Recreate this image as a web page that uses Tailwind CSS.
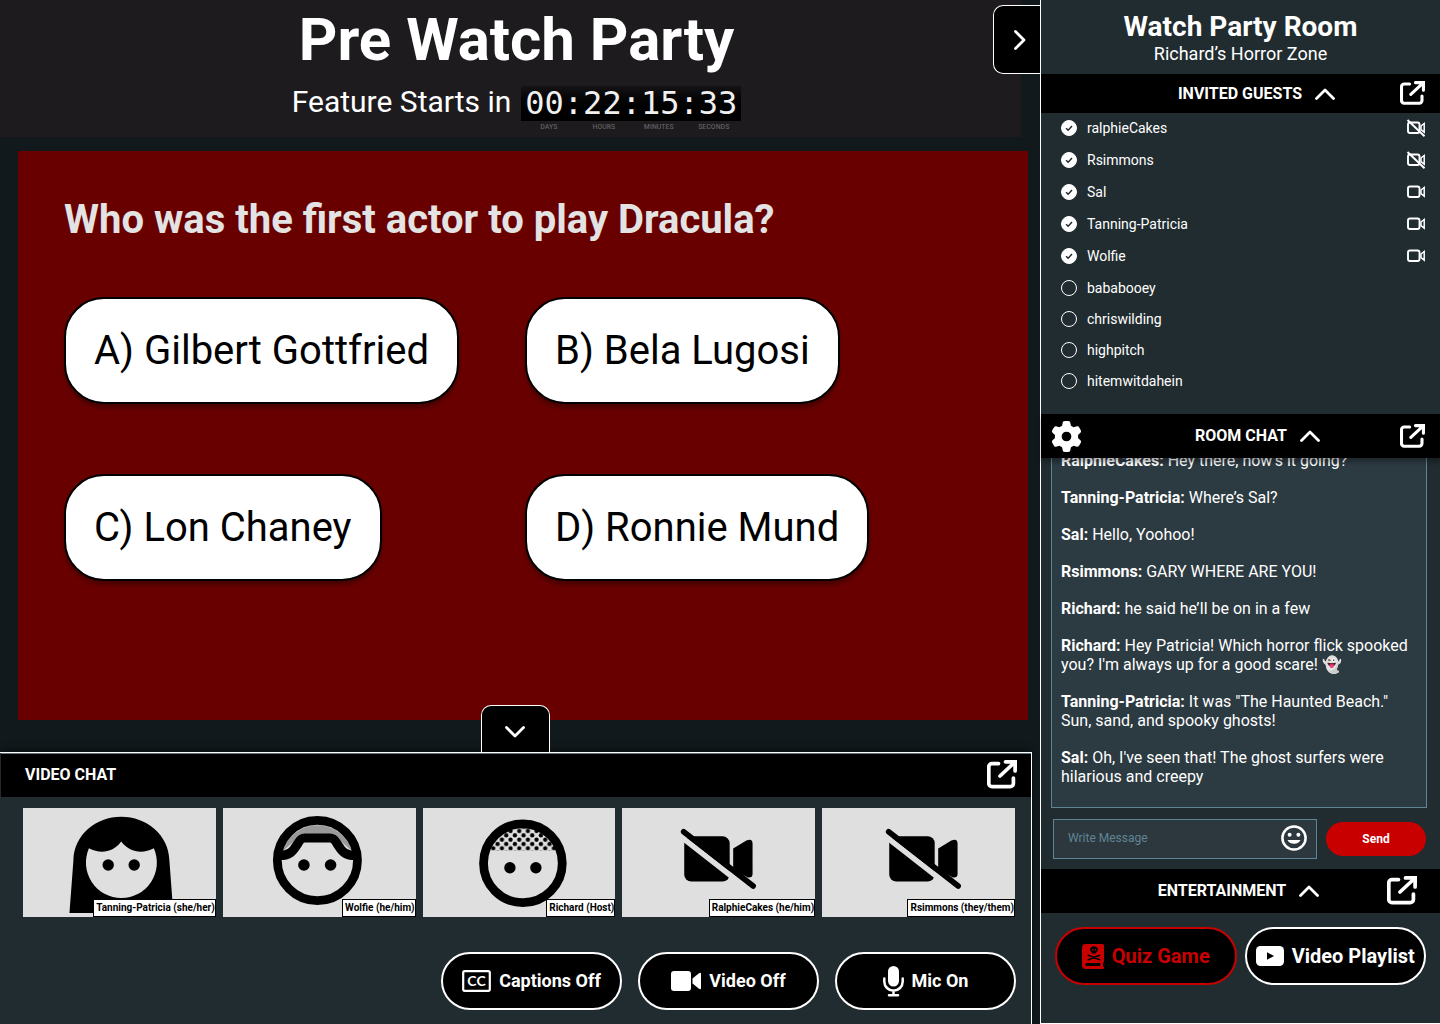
<!DOCTYPE html>
<html lang="en">
 <head>
  <meta charset="utf-8"/>
  <meta content="width=device-width, initial-scale=1" name="viewport"/>
  <title>Pre Watch Party</title>
  <script src="https://cdn.jsdelivr.net/npm/@tailwindcss/browser@4"></script>
 </head>
 <body class="bg-[#11191c] text-white font-['Roboto',sans-serif]">

  <!-- Shared icons -->
  <svg class="hidden">
    <symbol id="popout" viewBox="0 0 30 30">
      <path d="M11.5 3.6H5a3.2 3.2 0 0 0-3.2 3.2V23.5a3.2 3.2 0 0 0 3.2 3.2H23.2a3.2 3.2 0 0 0 3.2-3.2V18" fill="none" stroke="currentColor" stroke-width="3.7" stroke-linecap="round"/>
      <path d="M13 16 27.5 2.5M18.5 1.9H28.1V11" fill="none" stroke="currentColor" stroke-width="3.7" stroke-linecap="round"/>
      <path d="M22 .1H30V8z" fill="currentColor"/>
    </symbol>
    <symbol id="caret" viewBox="0 0 20 12">
      <path d="M1.5 10.5 10 2l8.5 8.5" fill="none" stroke="currentColor" stroke-width="2.8" stroke-linecap="round" stroke-linejoin="round"/>
    </symbol>
    <symbol id="cam" viewBox="0 0 20 18">
      <rect x="2" y="3.5" width="11.5" height="10.500" rx="2" fill="none" stroke="currentColor" stroke-width="1.9"/>
      <path d="M15 7 18.2 4.500V13.200L15 10.600z" fill="none" stroke="currentColor" stroke-width="1.500"/>
    </symbol>
    <symbol id="cam-off" viewBox="0 0 20 18">
      <use href="#cam"/>
      <path d="M1.500 1 18.500 17.200" stroke="currentColor" stroke-width="2"/>
    </symbol>
    <symbol id="no-video" viewBox="0 0 193 109">
      <rect x="67.3" y="28.300" width="45.500" height="45.300" rx="7"/>
      <path d="M116.300 40.500 129.500 32.600Q135.700 30 135.700 36V66Q135.700 70 131 69.500L116.300 61.500z"/>
      <path d="M60 25.500 133 82.500" stroke="#dfdfdf" stroke-width="5.500"/>
      <path d="M66.700 23.700 136.300 78" stroke="#000" stroke-width="5.600" stroke-linecap="round"/>
    </symbol>
  </svg>

  <div class="flex min-h-screen">

    <!-- Main column -->
    <main class="relative flex flex-1 flex-col">
      <header class="mr-[19px] flex h-[137px] flex-col items-center bg-[#1e1b1e] pt-2.5 pl-3">
        <h1 class="text-[60px] leading-[60px] font-bold">Pre Watch Party</h1>
        <div class="mt-3.5 flex items-start gap-2.5">
          <p class="text-[30px] leading-9">Feature Starts in</p>
          <div class="mt-0.5">
            <p class="bg-linear-to-b from-[#151315] to-black px-1 font-['DejaVu_Sans_Mono',monospace] text-[32px] leading-[35px] font-normal text-[#f0f0f0]">00:22:15:33</p>
            <div class="mt-0.5 grid grid-cols-4 text-center font-['Roboto_Condensed','Liberation_Sans_Narrow','Roboto',sans-serif] text-[8px] leading-2 text-[#6a686a]">
              <span>DAYS</span><span>HOURS</span><span>MINUTES</span><span>SECONDS</span>
            </div>
          </div>
        </div>
      </header>

      <section class="mt-3.5 mr-3 ml-[18px] flex-1 bg-[#690000] px-[46px] pt-11">
        <h2 class="text-[40px] leading-[50px] font-bold text-[#e3e3e3]">Who was the first actor to play Dracula?</h2>
        <div class="mt-[52px] grid grid-cols-2 justify-items-start gap-x-1 gap-y-[70px] text-[40px] text-black">
          <button class="h-[107px] rounded-[40px] border-2 border-black bg-white px-7 shadow-[0_4px_4px_rgba(0,0,0,0.3)]">A) Gilbert Gottfried</button>
          <button class="h-[107px] rounded-[40px] border-2 border-black bg-white px-7 shadow-[0_4px_4px_rgba(0,0,0,0.3)]">B) Bela Lugosi</button>
          <button class="h-[107px] rounded-[40px] border-2 border-black bg-white px-7 shadow-[0_4px_4px_rgba(0,0,0,0.3)]">C) Lon Chaney</button>
          <button class="h-[107px] rounded-[40px] border-2 border-black bg-white px-7 shadow-[0_4px_4px_rgba(0,0,0,0.3)]">D) Ronnie Mund</button>
        </div>
      </section>

      <!-- Video chat drawer -->
      <section class="relative mt-8 mr-2 border-t border-r border-white bg-[#212c30] pb-3.5 shadow-[0_-2px_8px_rgba(0,0,0,0.4)]">
        <button aria-label="Collapse video chat" class="absolute -top-12 left-[481px] flex h-[47px] w-[69px] items-center justify-center rounded-t-[10px] border border-b-0 border-white bg-black pt-1.5 pr-0.5">
          <svg class="h-3 w-5 rotate-180"><use href="#caret"/></svg>
        </button>
        <div class="relative ml-px flex h-11 items-center justify-between border-t border-[#5f7480] bg-black pr-3.5 pb-0.5 pl-6">
          <h3 class="text-base font-bold">VIDEO CHAT</h3>
          <button aria-label="Open video chat in a window"><svg class="size-[30px]"><use href="#popout"/></svg></button>
        </div>
        <div class="mt-[11px] grid grid-cols-5 gap-[7px] pr-4 pl-[23px] text-[10px] leading-4 font-bold text-black">
          <div class="relative h-[109px] bg-[#dfdfdf]">
            <svg class="size-full" viewBox="0 0 193 109">
              <path d="M46.500 105 50.500 52C51 27 73 8.700 98.300 8.700S146 27 146.500 52L150.500 105z"/>
              <path d="M66 40.300C77 46 90 45 98.300 33.500 107 45 120 46 131 40.300A35.500 35.500 0 1 1 66 40.300z" fill="#dfdfdf"/>
              <circle cx="85.300" cy="57" r="5.700"/><circle cx="111.300" cy="57" r="5.700"/>
            </svg>
            <span class="absolute right-0 bottom-0 border border-black bg-white pl-0.5">Tanning-Patricia (she/her)</span>
          </div>
          <div class="relative h-[109px] bg-[#dfdfdf]">
            <svg class="size-full" viewBox="0 0 193 109">
              <path d="M60 43A36 36 0 0 1 129 43L112 28H77z" fill="#999"/>
              <path d="M57 47.500C69 47.500 71 41 75.500 34.500 77.500 31 79 30 82 30H107C110 30 111.500 31 113.500 34.500 118 41 120 47.500 132 47.500" fill="none" stroke="#000" stroke-width="9.200"/>
              <circle cx="94.500" cy="52.500" r="40.100" fill="none" stroke="#000" stroke-width="8.800"/>
              <circle cx="81" cy="57" r="5.800"/><circle cx="107.700" cy="57" r="5.800"/>
            </svg>
            <span class="absolute right-0 bottom-0 border border-black bg-white pl-0.5">Wolfie (he/him)</span>
          </div>
          <div class="relative h-[109px] bg-[#dfdfdf]">
            <svg class="size-full" viewBox="0 0 193 109">
              <defs>
                <pattern id="stubble" x="66" y="33.800" width="8.670" height="8.670" patternUnits="userSpaceOnUse">
                  <circle cx="4.330" cy="6.500" r="2.150"/><circle cx="0" cy="2.170" r="2.150"/><circle cx="8.670" cy="2.170" r="2.150"/>
                </pattern>
                <clipPath id="scalp"><circle cx="100" cy="55.300" r="40"/></clipPath>
              </defs>
              <rect x="60" y="16" width="81" height="26.500" fill="url(#stubble)" clip-path="url(#scalp)"/>
              <circle cx="100" cy="55.300" r="39.400" fill="none" stroke="#000" stroke-width="8.800"/>
              <circle cx="87" cy="59.700" r="5.700"/><circle cx="113" cy="59.700" r="5.700"/>
            </svg>
            <span class="absolute right-0 bottom-0 border border-black bg-white pl-0.5">Richard (Host)</span>
          </div>
          <div class="relative h-[109px] bg-[#dfdfdf]">
            <svg class="size-full" viewBox="0 0 193 109"><use href="#no-video" x="-5" width="193" height="109"/></svg>
            <span class="absolute right-0 bottom-0 border border-black bg-white pl-0.5">RalphieCakes (he/him)</span>
          </div>
          <div class="relative h-[109px] bg-[#dfdfdf]">
            <svg class="size-full" viewBox="0 0 193 109"><use href="#no-video" width="193" height="109"/></svg>
            <span class="absolute right-0 bottom-0 border border-black bg-white pl-0.5">Rsimmons (they/them)</span>
          </div>
        </div>
        <div class="mt-[35px] flex justify-end gap-4 pr-[15px] text-lg font-bold">
          <button class="flex h-[58px] w-[181px] items-center justify-center gap-2 rounded-full border-2 border-white bg-black">
            <svg class="h-[22px] w-[29px]" viewBox="0 0 29 22">
              <rect x="1.200" y="1.200" width="26.600" height="19.600" rx="1.500" fill="none" stroke="#fff" stroke-width="2.200"/>
              <text x="14.500" y="15.800" text-anchor="middle" fill="#fff" font-family="Lato, sans-serif" font-weight="700" font-size="14">CC</text>
            </svg>
            Captions Off
          </button>
          <button class="flex h-[58px] w-[181px] items-center justify-center gap-2 rounded-full border-2 border-white bg-black">
            <svg class="h-5 w-[30px]" viewBox="0 0 30 20" fill="#fff"><rect width="20" height="20" rx="3"/><path d="M21.500 7.500 28 2.200Q30 1 30 3V17Q30 19 28 17.800L21.500 12.500z"/></svg>
            Video Off
          </button>
          <button class="flex h-[58px] w-[181px] items-center justify-center gap-2 rounded-full border-2 border-white bg-black">
            <svg class="h-[31px] w-[21px]" viewBox="0 0 21 31" fill="#fff">
              <rect x="5" y="0" width="11" height="20.500" rx="5.500"/>
              <path d="M1.300 12.500V15.500A9.200 9.200 0 0 0 19.700 15.500V12.500M10.500 24.500V29M6 29.300H15" fill="none" stroke="#fff" stroke-width="2.500" stroke-linecap="round"/>
            </svg>
            Mic On
          </button>
        </div>
      </section>

      <button aria-label="Collapse room panel" class="absolute top-[5px] right-0 flex h-[69px] w-[47px] items-center justify-center rounded-l-[10px] border border-r-0 border-white bg-black pl-1.5">
        <svg class="h-3 w-5 rotate-90"><use href="#caret"/></svg>
      </button>
    </main>

    <!-- Room sidebar -->
    <aside class="w-[400px] shrink-0 border-b border-l border-white bg-[#212c30]">
      <div class="h-[74px] pt-[11px] text-center">
        <h2 class="text-[28px] leading-8 font-bold">Watch Party Room</h2>
        <p class="text-lg leading-[22px]">Richard’s Horror Zone</p>
      </div>

      <div class="flex h-[39px] items-center bg-black pr-[15px] pl-[72px]">
        <button class="flex flex-1 items-center justify-center gap-[13px] text-base font-bold">INVITED GUESTS <svg class="h-3 w-5"><use href="#caret"/></svg></button>
        <button aria-label="Open guests in a window"><svg class="size-[25px]"><use href="#popout"/></svg></button>
      </div>
      <ul class="-mt-px h-[302px] pr-3.5 pl-5 text-sm">
        <li class="flex h-8 items-center justify-between">
          <label class="flex items-center gap-2.5"><span class="relative flex"><input type="checkbox" checked class="size-4 appearance-none rounded-full border border-white checked:bg-white"/><svg class="absolute inset-0 size-4" viewBox="0 0 16 16"><path d="m5 8.200 2.200 2L11 6" fill="none" stroke="#212c30" stroke-width="1.500"/></svg></span>ralphieCakes</label>
          <svg class="h-[18px] w-5"><use href="#cam-off"/></svg>
        </li>
        <li class="flex h-8 items-center justify-between">
          <label class="flex items-center gap-2.5"><span class="relative flex"><input type="checkbox" checked class="size-4 appearance-none rounded-full border border-white checked:bg-white"/><svg class="absolute inset-0 size-4" viewBox="0 0 16 16"><path d="m5 8.200 2.200 2L11 6" fill="none" stroke="#212c30" stroke-width="1.500"/></svg></span>Rsimmons</label>
          <svg class="h-[18px] w-5"><use href="#cam-off"/></svg>
        </li>
        <li class="flex h-8 items-center justify-between">
          <label class="flex items-center gap-2.5"><span class="relative flex"><input type="checkbox" checked class="size-4 appearance-none rounded-full border border-white checked:bg-white"/><svg class="absolute inset-0 size-4" viewBox="0 0 16 16"><path d="m5 8.200 2.200 2L11 6" fill="none" stroke="#212c30" stroke-width="1.500"/></svg></span>Sal</label>
          <svg class="h-[18px] w-5"><use href="#cam"/></svg>
        </li>
        <li class="flex h-8 items-center justify-between">
          <label class="flex items-center gap-2.5"><span class="relative flex"><input type="checkbox" checked class="size-4 appearance-none rounded-full border border-white checked:bg-white"/><svg class="absolute inset-0 size-4" viewBox="0 0 16 16"><path d="m5 8.200 2.200 2L11 6" fill="none" stroke="#212c30" stroke-width="1.500"/></svg></span>Tanning-Patricia</label>
          <svg class="h-[18px] w-5"><use href="#cam"/></svg>
        </li>
        <li class="flex h-8 items-center justify-between">
          <label class="flex items-center gap-2.5"><span class="relative flex"><input type="checkbox" checked class="size-4 appearance-none rounded-full border border-white checked:bg-white"/><svg class="absolute inset-0 size-4" viewBox="0 0 16 16"><path d="m5 8.200 2.200 2L11 6" fill="none" stroke="#212c30" stroke-width="1.500"/></svg></span>Wolfie</label>
          <svg class="h-[18px] w-5"><use href="#cam"/></svg>
        </li>
        <li class="flex h-[31px] items-center"><label class="flex items-center gap-2.5"><input type="checkbox" class="size-4 appearance-none rounded-full border border-white checked:bg-white"/>bababooey</label></li>
        <li class="flex h-[31px] items-center"><label class="flex items-center gap-2.5"><input type="checkbox" class="size-4 appearance-none rounded-full border border-white checked:bg-white"/>chriswilding</label></li>
        <li class="flex h-[31px] items-center"><label class="flex items-center gap-2.5"><input type="checkbox" class="size-4 appearance-none rounded-full border border-white checked:bg-white"/>highpitch</label></li>
        <li class="flex h-[31px] items-center"><label class="flex items-center gap-2.5"><input type="checkbox" class="size-4 appearance-none rounded-full border border-white checked:bg-white"/>hitemwitdahein</label></li>
      </ul>

      <div class="relative flex h-11 items-center bg-black pr-[15px] pl-2.5 shadow-[0_4px_4px_rgba(0,0,0,0.3)]">
        <button aria-label="Chat settings" class="mr-[33px]">
          <svg class="size-[31px]" viewBox="0 0 512 512" fill="currentColor"><path d="M495.9 166.6c3.200 8.700 .5 18.400-6.400 24.600l-43.300 39.400c1.100 8.300 1.700 16.800 1.700 25.400s-.6 17.100-1.700 25.400l43.300 39.400c6.900 6.200 9.600 15.900 6.400 24.600c-4.400 11.900-9.700 23.300-15.800 34.300l-4.700 8.100c-6.600 11-14 21.400-22.100 31.200c-5.900 7.200-15.700 9.600-24.500 6.800l-55.700-17.700c-13.400 10.300-28.200 18.900-44 25.400l-12.500 57.100c-2 9.100-9 16.300-18.200 17.800c-13.800 2.300-28 3.500-42.500 3.500s-28.700-1.200-42.500-3.500c-9.200-1.500-16.200-8.700-18.200-17.800l-12.500-57.100c-15.800-6.500-30.600-15.100-44-25.400L83.100 425.900c-8.800 2.800-18.600 .3-24.500-6.800c-8.100-9.800-15.500-20.200-22.100-31.200l-4.700-8.100c-6.100-11-11.400-22.400-15.800-34.300c-3.200-8.700-.5-18.400 6.400-24.600l43.300-39.400C64.600 273.100 64 264.600 64 256s.6-17.100 1.700-25.400L22.400 191.200c-6.900-6.200-9.600-15.900-6.400-24.600c4.400-11.900 9.700-23.300 15.800-34.300l4.700-8.100c6.600-11 14-21.400 22.100-31.200c5.900-7.200 15.700-9.600 24.500-6.800l55.700 17.700c13.400-10.300 28.200-18.900 44-25.400l12.500-57.100c2-9.100 9-16.300 18.200-17.800C227.300 1.200 241.500 0 256 0s28.700 1.200 42.500 3.500c9.200 1.500 16.200 8.700 18.200 17.800l12.500 57.100c15.800 6.500 30.600 15.100 44 25.400l55.700-17.700c8.800-2.800 18.600-.3 24.500 6.800c8.100 9.800 15.500 20.200 22.100 31.200l4.700 8.100c6.100 11 11.400 22.400 15.800 34.300zM256 336a80 80 0 1 0 0-160 80 80 0 1 0 0 160z"/></svg>
        </button>
        <button class="flex flex-1 items-center justify-center gap-[13px] text-base font-bold">ROOM CHAT <svg class="h-3 w-5"><use href="#caret"/></svg></button>
        <button aria-label="Open chat in a window"><svg class="size-[25px]"><use href="#popout"/></svg></button>
      </div>
      <div class="mr-[13px] ml-2.5 flex h-[350px] flex-col justify-end gap-[18px] overflow-hidden border border-t-0 border-[#5f8495] bg-[#2c3a41] pb-[21px] pr-2 pl-[9px] text-base leading-[19px]">
        <p><b>RalphieCakes:</b> Hey there, how’s it going?</p>
        <p><b>Tanning-Patricia:</b> Where’s Sal?</p>
        <p><b>Sal:</b> Hello, Yoohoo!</p>
        <p><b>Rsimmons:</b> GARY WHERE ARE YOU!</p>
        <p><b>Richard:</b> he said he’ll be on in a few</p>
        <p><b>Richard:</b> Hey Patricia! Which horror flick spooked you? I'm always up for a good scare! 👻</p>
        <p><b>Tanning-Patricia:</b> It was "The Haunted Beach." Sun, sand, and spooky ghosts!</p>
        <p><b>Sal:</b> Oh, I've seen that! The ghost surfers were hilarious and creepy</p>
      </div>
      <form class="flex items-center gap-[9px] pt-[11px] pr-3.5 pb-2.5 pl-3 text-xs">
        <div class="flex h-10 flex-1 items-center border border-[#5f8495] bg-[#2d383e] pr-[9px] pb-0.5 pl-3.5">
          <input type="text" aria-label="Write Message" placeholder="Write Message" class="min-w-0 flex-1 outline-none placeholder:text-[#5f8495]"/>
          <button type="button" aria-label="Add emoji">
            <svg class="size-[26px]" viewBox="0 0 26 26" fill="#fff"><circle cx="13" cy="13" r="11.600" fill="none" stroke="#fff" stroke-width="2.500"/><circle cx="8.600" cy="9.700" r="2"/><circle cx="17.400" cy="9.700" r="2"/><path d="M6.500 15H19.500A6.800 5.200 0 0 1 6.500 15z"/></svg>
          </button>
        </div>
        <button type="button" class="h-[34px] w-[100px] rounded-full bg-[#c80000] font-bold">Send</button>
      </form>

      <div class="flex h-11 items-center bg-black pr-[23px] pl-[49px]">
        <button class="flex flex-1 items-center justify-center gap-[13px] text-base font-bold">ENTERTAINMENT <svg class="h-3 w-5"><use href="#caret"/></svg></button>
        <button aria-label="Open entertainment in a window"><svg class="size-[30px]"><use href="#popout"/></svg></button>
      </div>
      <div class="flex gap-2 pt-3.5 pr-3.5 pl-3.5 text-xl font-bold">
        <button class="flex h-[58px] flex-1 items-center justify-center gap-2 rounded-full border-2 border-[#c80000] bg-black whitespace-nowrap text-[#c80000]">
          <svg class="h-[25px] w-[22px]" viewBox="0 0 22 25">
            <path d="M4 0H20.500Q22 0 22 1.500V17.500Q22 18.500 21 19V22.300Q22 22.500 22 23.600T21 25H4Q0 25 0 21V4Q0 0 4 0z" fill="#c80000"/>
            <path d="M4.800 19H18.300V22H4.800a1.500 1.500 0 0 1 0-3z" fill="#000"/>
            <path d="M12 2.200c-2.300 0-4 1.500-4 3.300 0 1.200.7 2 1.700 2.600V9.500H14.300V8.100C15.300 7.500 16 6.700 16 5.500 16 3.700 14.300 2.200 12 2.200z" fill="#000"/>
            <circle cx="10.500" cy="5.700" r=".8" fill="#c80000"/><circle cx="13.500" cy="5.700" r=".8" fill="#c80000"/>
            <path d="M6.300 11.300 17.700 15.700M17.700 11.300 6.300 15.700" stroke="#000" stroke-width="1.600" stroke-linecap="round"/>
          </svg>
          Quiz Game
        </button>
        <button class="flex h-[58px] flex-1 items-center justify-center gap-2 rounded-full border-2 border-white bg-black whitespace-nowrap">
          <svg class="h-5 w-7" viewBox="0 0 28 20"><rect width="28" height="20" rx="4.500" fill="#fff"/><path d="M11 6.200V13.800L18 10z"/></svg>
          Video Playlist
        </button>
      </div>
    </aside>
  </div>
 </body>
</html>
